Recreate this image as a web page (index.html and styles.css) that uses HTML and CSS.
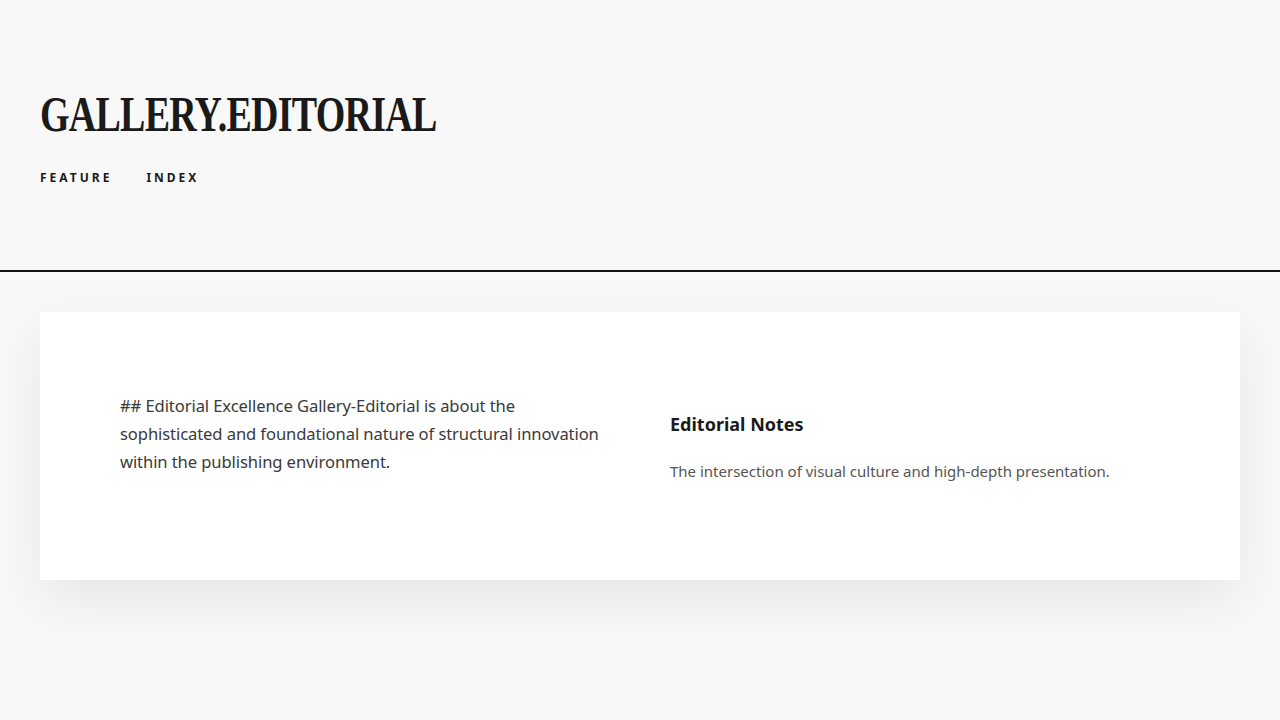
FILE: index.html
```html
<!DOCTYPE html>
<html lang="en">
<head>
<meta charset="utf-8">
<title>Gallery.Editorial</title>
<link rel="stylesheet" href="styles.css">
</head>
<body>
<header class="site-header">
  <h1 class="brand">GALLERY.EDITORIAL</h1>
  <nav class="nav">
    <a class="nav-link" href="#">FEATURE</a>
    <a class="nav-link" href="#">INDEX</a>
  </nav>
</header>
<main class="main">
  <section class="card">
    <div class="card-main">
      <p class="lead">## Editorial Excellence Gallery-Editorial is about the sophisticated and foundational nature of structural innovation within the publishing environment.</p>
    </div>
    <aside class="card-side">
      <h3 class="side-title">Editorial Notes</h3>
      <p class="side-text">The intersection of visual culture and high-depth presentation.</p>
    </aside>
  </section>
</main>
</body>
</html>
```
FILE: styles.css
```css
* { box-sizing: border-box; }
html, body { margin: 0; padding: 0; }
body {
  background: #f8f8f8;
  color: #1a1a1a;
  font-family: "Noto Sans", "Open Sans", sans-serif;
  min-height: 720px;
}
.site-header {
  padding: 86px 40px 0;
  height: 272px;
  border-bottom: 2px solid #111;
}
.brand {
  margin: 0;
  font-family: "Liberation Serif", serif;
  font-weight: 700;
  font-size: 50px;
  line-height: 56px;
  letter-spacing: -1px;
  color: #1a1a1a;
  transform: scaleX(0.76);
  transform-origin: left center;
  white-space: nowrap;
}
.nav {
  display: flex;
  gap: 34px;
  margin-top: 28px;
}
.nav-link {
  font-family: "Noto Sans", sans-serif;
  font-weight: 700;
  font-size: 12px;
  letter-spacing: 0.25em;
  color: #1a1a1a;
  text-decoration: none;
  line-height: 16px;
}
.main {
  padding: 40px 40px 0;
}
.card {
  background: #fff;
  padding: 80px;
  display: grid;
  grid-template-columns: 1fr 1fr;
  gap: 60px;
  min-height: 268px;
  box-shadow: 0 20px 50px rgba(0, 0, 0, 0.07);
}
.lead {
  margin: 0;
  font-size: 16.6px;
  line-height: 28px;
  letter-spacing: -0.1px;
  color: #3a3a3a;
}
.card-side {
  padding-top: 18px;
}
.side-title {
  margin: 0;
  font-size: 18px;
  line-height: 28px;
  font-weight: 700;
  color: #1a1a1a;
}
.side-text {
  margin: 21px 0 0;
  font-size: 15px;
  line-height: 24px;
  color: #555;
}
```
